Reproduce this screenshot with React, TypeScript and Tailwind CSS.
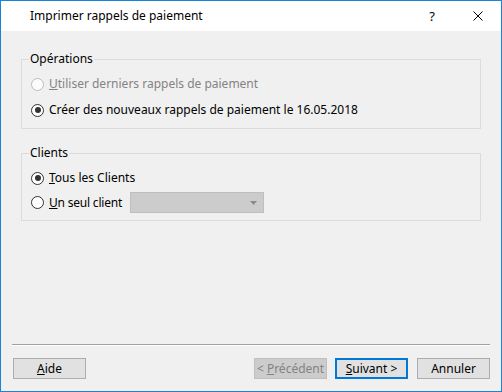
import React from "react";

const font = { fontFamily: '"Noto Sans", "Open Sans", sans-serif' };

function Radio({ checked, disabled }: { checked?: boolean; disabled?: boolean }) {
  return (
    <span
      className={
        "flex h-[13px] w-[13px] shrink-0 items-center justify-center rounded-full border " +
        (disabled ? "border-[#bcbcbc] bg-[#fcfcfc]" : "border-[#333333] bg-white")
      }
    >
      {checked ? <span className="h-[6px] w-[6px] rounded-full bg-[#333333]" /> : null}
    </span>
  );
}

function Group({ title, className, children }: { title: string; className: string; children: React.ReactNode }) {
  return (
    <div className={"relative border border-[#dcdcdc] " + className}>
      <span className="absolute left-[7px] top-[-9px] bg-[#f0f0f0] px-[1px] text-[12px] leading-[16px] text-black">
        {title}
      </span>
      {children}
    </div>
  );
}

function Btn({
  children,
  disabled,
  primary,
  className = "",
}: {
  children: React.ReactNode;
  disabled?: boolean;
  primary?: boolean;
  className?: string;
}) {
  let cls = "border border-[#adadad] bg-[#e1e1e1] text-black";
  if (disabled) cls = "border border-[#bfbfbf] bg-[#cccccc] text-[#838383]";
  if (primary) cls = "border-2 border-[#0078d7] bg-[#e1e1e1] text-black";
  return (
    <div
      className={
        "flex h-[21px] w-[73px] items-center justify-center whitespace-pre text-[12px] leading-[14px] " +
        cls +
        " " +
        className
      }
    >
      {children}
    </div>
  );
}

export default function App() {
  return (
    <div
      style={font}
      className="flex h-[392px] w-[502px] flex-col border border-[#1883d7] bg-[#f0f0f0] text-[12px] text-black"
    >
      {/* Title bar */}
      <div className="flex h-[30px] shrink-0 items-center bg-white">
        <span className="pl-[29px] text-[12px] leading-[16px] text-black">Imprimer rappels de paiement</span>
        <div className="ml-auto flex h-full">
          <div className="flex h-full w-[46px] items-center justify-center text-[13px] leading-[16px]">?</div>
          <div className="flex h-full w-[46px] items-center justify-center">
            <svg width="10" height="10" viewBox="0 0 10 10">
              <path d="M0.5 0.5 L9.5 9.5 M9.5 0.5 L0.5 9.5" stroke="#000" strokeWidth="1" fill="none" />
            </svg>
          </div>
        </div>
      </div>

      {/* Content */}
      <div className="flex flex-1 flex-col px-[20px] pt-[28px]">
        <Group title="Opérations" className="h-[70px] pt-[17px] pl-[9px]">
          <div className="flex h-[14px] items-center gap-[5px] text-[#838383]">
            <Radio disabled />
            <span className="leading-[14px]">
              <span className="underline">U</span>tiliser derniers rappels de paiement
            </span>
          </div>
          <div className="mt-[12px] flex h-[14px] items-center gap-[5px]">
            <Radio checked />
            <span className="leading-[14px]">Créer des nouveaux rappels de paiement le 16.05.2018</span>
          </div>
        </Group>

        <Group title="Clients" className="mt-[24px] h-[68px] pt-[17px] pl-[9px]">
          <div className="flex h-[14px] items-center gap-[5px]">
            <Radio checked />
            <span className="leading-[14px]">
              <span className="underline">T</span>ous les Clients
            </span>
          </div>
          <div className="mt-[7px] flex h-[21px] items-center">
            <Radio />
            <span className="ml-[5px] shrink-0 whitespace-nowrap leading-[14px] tracking-[-0.2px]">
              <span className="underline">U</span>n seul client
            </span>
            <div className="ml-[8px] flex h-[21px] w-[134px] shrink-0 items-center justify-end border border-[#bfbfbf] bg-[#cccccc] pr-[6px]">
              <svg width="7" height="4" viewBox="0 0 7 4">
                <path d="M0 0 L7 0 L3.5 4 Z" fill="#8a8a8a" />
              </svg>
            </div>
          </div>
        </Group>
      </div>

      {/* Footer */}
      <div className="flex shrink-0 flex-col">
        <div className="ml-[11px] mr-[11px] h-[1px] bg-[#a0a0a0]" />
        <div className="ml-[11px] mr-[11px] h-[1px] bg-white" />
        <div className="mt-[12px] mb-[12px] flex pl-[12px] pr-[11px]">
          <Btn>
            <span className="underline">A</span>ide
          </Btn>
          <div className="flex-1" />
          <Btn disabled>
            {"< "}
            <span className="underline">P</span>
            {"récédent"}
          </Btn>
          <Btn primary className="ml-[8px]">
            <span className="underline">S</span>
            {"uivant >"}
          </Btn>
          <Btn className="ml-[9px]">Annuler</Btn>
        </div>
      </div>
    </div>
  );
}
